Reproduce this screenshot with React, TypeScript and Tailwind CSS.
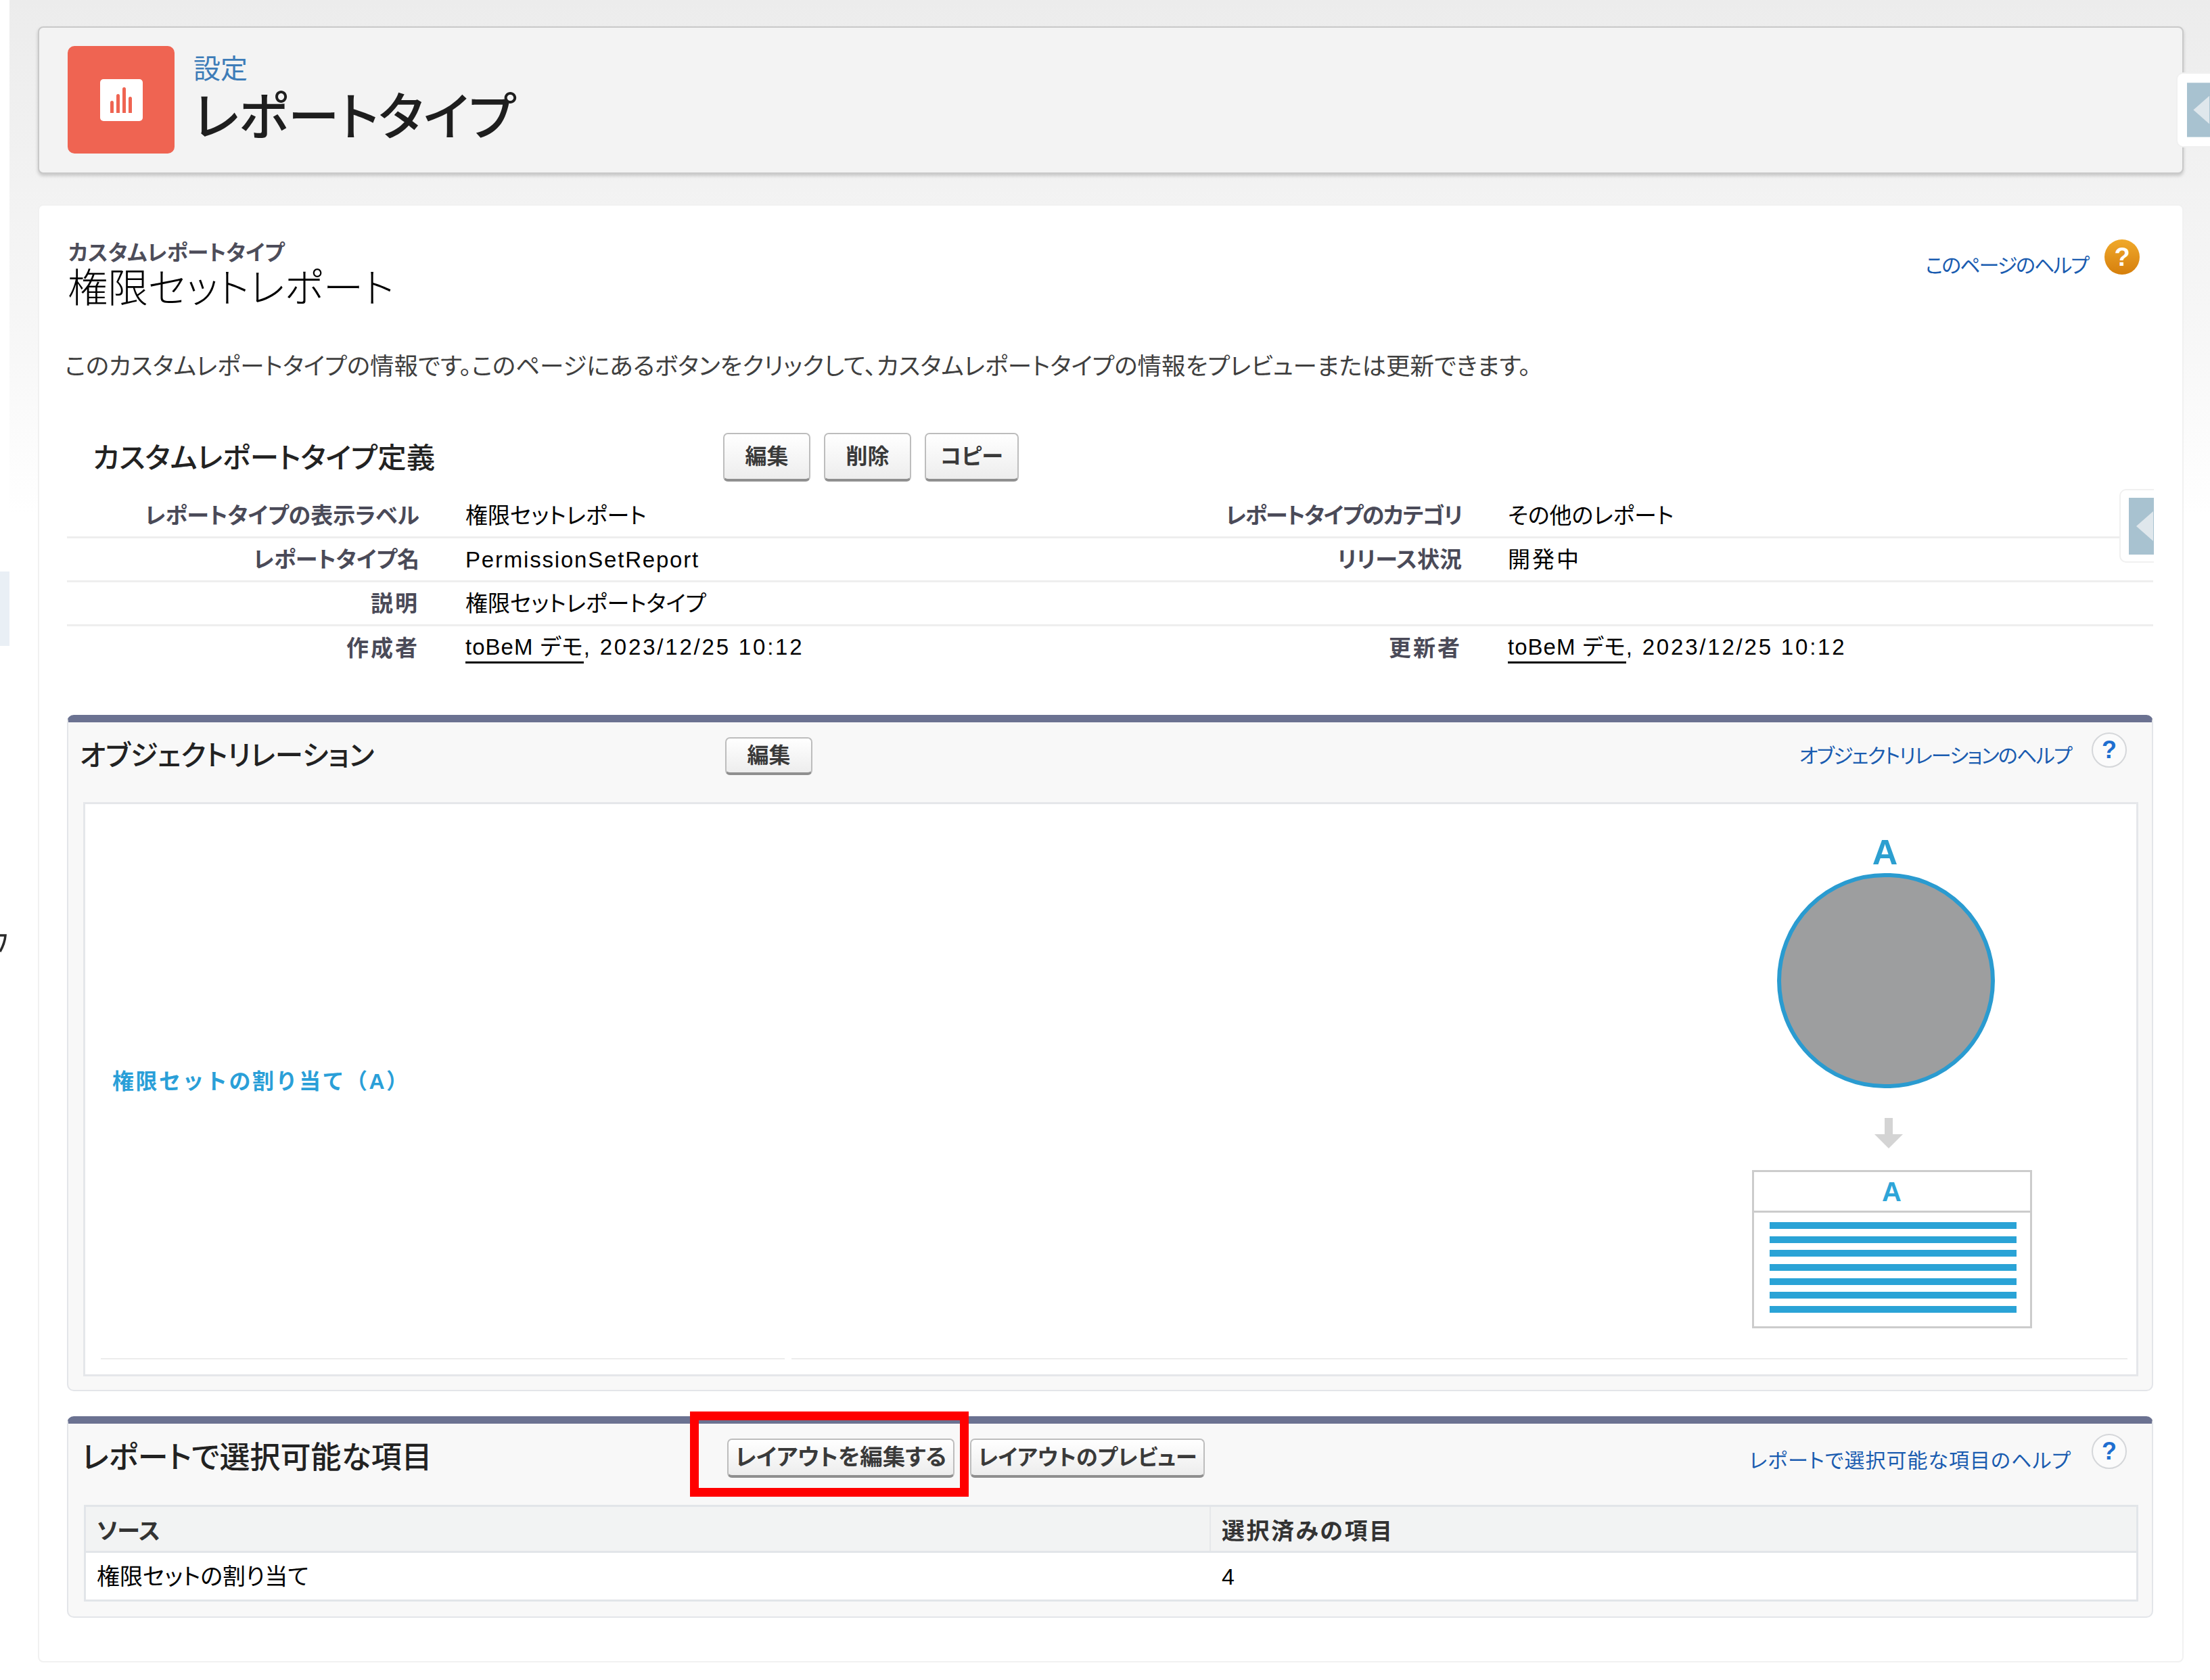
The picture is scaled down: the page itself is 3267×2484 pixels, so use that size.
const palt = "[font-feature-settings:'palt']";

function Btn({ label, w, h = 72, size = 32 }: { label: string; w: number; h?: number; size?: number }) {
  return (
    <button
      style={{ width: w, height: h, fontSize: size }}
      className="flex shrink-0 items-center justify-center rounded-[7px] border-2 border-b-4 border-[#bdbdbd] border-b-[#8f8f8f] bg-gradient-to-b from-white to-[#ededed] font-bold leading-none text-[#3a3a3a]"
    >
      {label}
    </button>
  );
}

function BlueHelp() {
  return (
    <span className="flex h-[52px] w-[52px] shrink-0 items-center justify-center rounded-full border-2 border-[#d5d7da] bg-[#fbfbfb] text-[36px] font-bold leading-none text-[#1f6fd0]">
      ?
    </span>
  );
}

function Row({ l1, v1, l2, v2, last, kanji1, kanji2, narrow2 }: { l1: string; v1: React.ReactNode; l2?: string; v2?: React.ReactNode; last?: boolean; kanji1?: boolean; kanji2?: boolean; narrow2?: boolean }) {
  return (
    <div className={`flex h-[65px] items-center text-[33px] leading-none ${last ? "" : "border-b-[3px] border-[#eeeeee]"}`}>
      <div className={`w-[521px] text-right font-bold text-[#4a4a58] ${kanji1 ? "tracking-[3px]" : ""}`}>{l1}</div>
      <div className="ml-[68px] w-[1473px] text-black">{v1}</div>
      <div className={`-ml-[1000px] w-[1000px] text-right font-bold text-[#4a4a58] ${kanji2 ? "tracking-[3px]" : ""} ${narrow2 ? "tracking-[-1.5px]" : ""}`}>{l2}</div>
      <div className="ml-[68px] text-black">{v2}</div>
    </div>
  );
}

function Who() {
  return (
    <span className="relative -top-[2px]">
      <span className="border-b-[3px] border-black pb-[3px] tracking-[1px]">toBeM デモ</span>
      <span className="tracking-[2.8px]">, 2023/12/25 10:12</span>
    </span>
  );
}

function Tab({ h, w }: { h: number; w: number }) {
  return (
    <svg width={w} height={h} viewBox={`0 0 ${w} ${h}`}>
      <rect width={w} height={h} fill="#a8c2d0" />
      <path d={`M${w - 1} ${h / 2 - 22}V${h / 2 + 22}L${w - 26} ${h / 2}Z`} fill="#dfe7ec" />
    </svg>
  );
}

export default function App() {
  return (
    <div className={`relative flex h-[2484px] w-[3267px] overflow-hidden bg-white font-['Liberation_Sans','Noto_Sans_CJK_JP',sans-serif] ${palt}`}>
      <div className="flex w-[14px] shrink-0 flex-col overflow-hidden bg-white pt-[845px]">
        <div className="h-[110px] bg-[#e9eff5]" />
        <svg className="mt-[424px]" width="10" height="34" viewBox="0 0 10 34">
          <path d="M0 4H8Q7 16 0 28" fill="none" stroke="#2a2a2a" strokeWidth="3.5" />
        </svg>
      </div>

      <div className="flex-1 bg-[linear-gradient(#ececec,#f7f7f7_500px,#ffffff_760px)] pl-[42px] pr-[39px] pt-[39px]">
        <header className="flex h-[218px] items-start rounded-[8px] border-2 border-[#c9c9c9] bg-[#f3f3f3] pl-[42px] pt-[27px] shadow-[0_3px_5px_rgba(0,0,0,0.18)]">
          <div className="flex h-[159px] w-[158px] items-center justify-center rounded-[10px] bg-[#ef6452]">
            <div className="flex h-[62px] w-[63px] items-end justify-center gap-[4px] rounded-[5px] bg-white pb-[12px]">
              <span className="h-[18px] w-[5px] rounded-t bg-[#ef6452]" />
              <span className="h-[28px] w-[5px] rounded-t bg-[#ef6452]" />
              <span className="h-[38px] w-[5px] rounded-t bg-[#ef6452]" />
              <span className="h-[24px] w-[5px] rounded-t bg-[#ef6452]" />
            </div>
          </div>
          <div className="ml-[28px] flex flex-col">
            <span className="mt-[10px] text-[40px] leading-[48px] text-[#3d7cb8]">設定</span>
            <span className="mt-[10px] text-[76px] font-medium leading-[76px] text-[#1e1e1e]">レポートタイプ</span>
          </div>
        </header>

        <main className="mt-[45px] h-[2156px] rounded-[8px] border-2 border-[#f1f1f1] bg-white pl-[41px] pr-[43px]">
          <div className="flex items-start justify-between">
            <div className="flex flex-col pl-[2px] pt-[54px]">
              <span className="text-[31.5px] font-bold leading-[32px] text-[#4d4d5a]">カスタムレポートタイプ</span>
              <span className="-ml-[1px] mt-[4px] text-[59.5px] font-light leading-[66px] text-black">権限セットレポート</span>
            </div>
            <div className="flex items-start pr-[20px] pt-[50px]">
              <a className="mt-[20px] text-[30px] leading-[38px] tracking-[-2px] text-[#1a5cb0]">このページのヘルプ</a>
              <span className="ml-[24px] flex h-[52px] w-[52px] items-center justify-center rounded-full bg-gradient-to-b from-[#f0a92a] to-[#d67f0a] text-[38px] font-bold leading-none text-white">?</span>
            </div>
          </div>

          <p className="-ml-[3px] mt-[60px] text-[35.5px] leading-[44px] text-[#3f3f3f]">
            このカスタムレポートタイプの情報です。このページにあるボタンをクリックして、カスタムレポートタイプの情報をプレビューまたは更新できます。
          </p>

          <div className="mt-[76px] flex h-[72px] items-center">
            <h2 className="ml-[38px] w-[932px] pt-[4px] text-[42.5px] font-medium leading-none text-[#222]">カスタムレポートタイプ定義</h2>
            <div className="flex gap-[20px]">
              <Btn label="編集" w={129} />
              <Btn label="削除" w={129} />
              <Btn label="コピー" w={139} />
            </div>
          </div>

          <div className="mt-[19px]">
            <Row l1="レポートタイプの表示ラベル" v1="権限セットレポート" l2="レポートタイプのカテゴリ" v2="その他のレポート" narrow2 />
            <Row l1="レポートタイプ名" v1={<span className="tracking-[1.8px]">PermissionSetReport</span>} l2="リリース状況" v2={<span className="tracking-[3px]">開発中</span>} />
            <Row l1="説明" v1="権限セットレポートタイプ" kanji1 />
            <Row l1="作成者" v1={<Who />} l2="更新者" v2={<Who />} last kanji1 kanji2 />
          </div>

          <section className="mt-[66px] h-[1000px] rounded-[10px] border-2 border-t-[11px] border-[#e3e5e9] border-t-[#6b7291] bg-[#f8f8f8] pl-[22px] pr-[20px]">
            <div className="flex h-[118px] items-center">
              <h3 className="-ml-[5px] mb-[18px] w-[954px] text-[41.5px] font-medium leading-none text-[#222]">オブジェクトリレーション</h3>
              <div className="mb-[18px]"><Btn label="編集" w={129} h={56} /></div>
              <div className="mb-[18px] ml-auto mr-[17px] flex items-start">
                <a className="mt-[2px] text-[30px] leading-none tracking-[-1.7px] text-[#1a5cb0]">オブジェクトリレーションのヘルプ</a>
                <span className="-mt-[18px] ml-[30px]"><BlueHelp /></span>
              </div>
            </div>
            <div className="flex h-[849px] flex-col border-[3px] border-[#e5e7ea] bg-white">
              <div className="flex min-h-0 flex-1">
                <div className="flex flex-1 flex-col pl-[40px]">
                  <a className="mt-[390px] text-[32px] font-bold leading-[40px] tracking-[2.5px] text-[#2a9fd8] [font-feature-settings:normal]">権限セットの割り当て（A）</a>
                </div>
                <div className="flex w-[648px] flex-col items-center pr-[75px]">
                  <span className="-ml-[20px] mt-[40px] text-[52px] font-bold leading-[62px] text-[#2c9fd0]">A</span>
                  <div className="-ml-[18px] mt-0 h-[318px] w-[322px] shrink-0 rounded-full border-[6px] border-[#2a9bd0] bg-[#9d9e9f]" />
                  <svg className="-ml-[10px] mt-[44px] shrink-0" width="42" height="45" viewBox="0 0 42 45"><path d="M15 0h12v24h15L21 45 0 24h15z" fill="#d4d4d4" /></svg>
                  <div className="mt-[32px] flex h-[234px] w-[414px] shrink-0 flex-col border-[3px] border-[#cccccc]">
                    <div className="flex h-[60px] shrink-0 items-center justify-center border-b-[3px] border-[#cccccc] text-[40px] font-bold leading-none text-[#2ea5d8]">A</div>
                    <div className="flex flex-col gap-[10.7px] pl-[23px] pr-[20px] pt-[14px]">
                      {[0, 1, 2, 3, 4, 5, 6].map((i) => (
                        <div key={i} className="h-[10px] bg-[#2aa3d6]" />
                      ))}
                    </div>
                  </div>
                </div>
              </div>
              <div className="mb-[22px] ml-[23px] mr-[13px] flex gap-[10px]">
                <div className="h-[2px] w-[1011px] bg-[#ececec]" />
                <div className="h-[2px] flex-1 bg-[#ececec]" />
              </div>
            </div>
          </section>

          <section className="relative mt-[37px] h-[298px] rounded-[10px] border-2 border-t-[11px] border-[#e3e5e9] border-t-[#6b7291] bg-[#f8f8f8] pl-[23px] pr-[20px]">
            <div className="flex h-[120px] items-start pt-[22px]">
              <h3 className="-ml-[3px] mt-[4px] w-[954px] text-[45px] font-medium leading-[50px] text-[#222]">レポートで選択可能な項目</h3>
              <Btn label="レイアウトを編集する" w={336} h={58} size={33.5} />
              <span className="ml-[23px]"><Btn label="レイアウトのプレビュー" w={347} h={58} /></span>
              <div className="ml-auto mr-[17px] flex items-start">
                <a className="mt-[18px] text-[30px] leading-none tracking-[1px] text-[#1a5cb0]">レポートで選択可能な項目のヘルプ</a>
                <span className="-mt-[7px] ml-[30px]"><BlueHelp /></span>
              </div>
            </div>
            <div className="border-[3px] border-[#e2e5e9] text-[34px] leading-none">
              <div className="flex h-[68px] items-center border-b-[3px] border-[#e2e5e9] bg-[#f2f3f3] font-bold text-[#333]">
                <div className="flex h-full w-[1663px] items-center border-r-2 border-[#e6e8ea] pl-[16px] pt-[6px]">ソース</div>
                <div className="pl-[16px] pt-[6px] tracking-[2.5px]">選択済みの項目</div>
              </div>
              <div className="flex h-[69px] items-center bg-white text-black">
                <div className="w-[1663px] pl-[16px]">権限セットの割り当て</div>
                <div className="pl-[16px]">4</div>
              </div>
            </div>
            <div className="absolute left-[919px] top-[-18px] h-[126px] w-[412px] border-[13px] border-[#ff0000]" />
          </section>
        </main>
      </div>

      <div className="absolute left-[3217px] top-[107px] flex h-[111px] w-[50px] items-center rounded-l-[10px] border-2 border-r-0 border-[#f0f0f0] bg-white pl-[14px]">
        <Tab h={85} w={36} />
      </div>
      <div className="absolute left-[3133px] top-[723px] flex h-[109px] w-[51px] items-center rounded-l-[10px] border-2 border-r-0 border-[#f0f0f0] bg-white pl-[12px]">
        <Tab h={84} w={37} />
      </div>
    </div>
  );
}
